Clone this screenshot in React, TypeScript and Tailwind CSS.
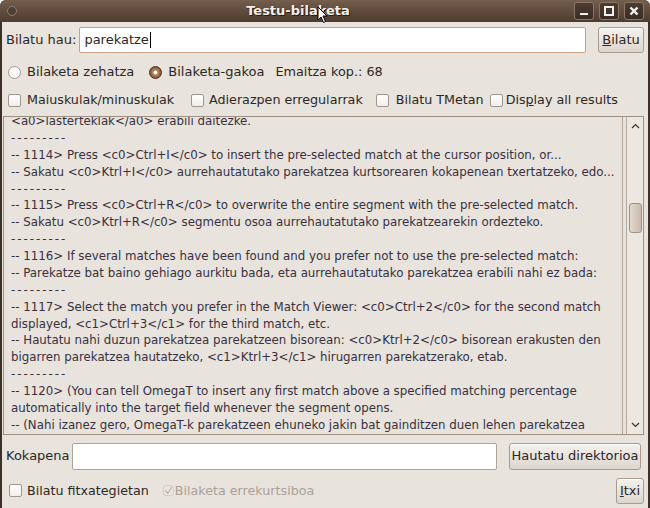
import React from 'react';

const lines = [
  '<a0>lasterteklak</a0> erabili daitezke.',
  '---------',
  '-- 1114> Press <c0>Ctrl+I</c0> to insert the pre-selected match at the cursor position, or...',
  '-- Sakatu <c0>Ktrl+I</c0> aurrehautatutako parekatzea kurtsorearen kokapenean txertatzeko, edo...',
  '---------',
  '-- 1115> Press <c0>Ctrl+R</c0> to overwrite the entire segment with the pre-selected match.',
  '-- Sakatu <c0>Ktrl+R</c0> segmentu osoa aurrehautatutako parekatzearekin ordezteko.',
  '---------',
  '-- 1116> If several matches have been found and you prefer not to use the pre-selected match:',
  '-- Parekatze bat baino gehiago aurkitu bada, eta aurrehautatutako parekatzea erabili nahi ez bada:',
  '---------',
  '-- 1117> Select the match you prefer in the Match Viewer: <c0>Ctrl+2</c0> for the second match',
  'displayed, <c1>Ctrl+3</c1> for the third match, etc.',
  '-- Hautatu nahi duzun parekatzea parekatzeen bisorean: <c0>Ktrl+2</c0> bisorean erakusten den',
  'bigarren parekatzea hautatzeko, <c1>Ktrl+3</c1> hirugarren parekatzerako, etab.',
  '---------',
  '-- 1120> (You can tell OmegaT to insert any first match above a specified matching percentage',
  'automatically into the target field whenever the segment opens.',
  '-- (Nahi izanez gero, OmegaT-k parekatzeen ehuneko jakin bat gainditzen duen lehen parekatzea',
];

const Radio = ({ checked }: { checked?: boolean }) => (
  <svg width="13" height="13" viewBox="0 0 13 13" className="shrink-0">
    {checked ? (
      <>
        <circle cx="6.5" cy="6.5" r="6" fill="#8a5f43" stroke="#4e3325" />
        <circle cx="6.5" cy="6.5" r="4" fill="#b27c55" />
        <circle cx="6.5" cy="6.5" r="2" fill="#ffffff" />
      </>
    ) : (
      <circle cx="6.5" cy="6.5" r="6" fill="#fbfaf9" stroke="#a29990" />
    )}
  </svg>
);

const Check = ({ disabled }: { disabled?: boolean }) =>
  disabled ? (
    <svg width="11" height="13" viewBox="0 0 11 13" className="shrink-0">
      <rect x="0.5" y="1.5" width="10" height="10" rx="2" fill="none" stroke="#d6cfc8" />
      <path d="M2.5 6.5 L4.8 9.3 L8.8 3" fill="none" stroke="#bdb4ab" strokeWidth="1.2" />
    </svg>
  ) : (
    <div className="w-[13px] h-[13px] shrink-0 rounded-[2px] border border-[#9f968d] bg-linear-to-b from-white to-[#f1ede9]" />
  );

const Button = ({ children, className = '' }: { children: React.ReactNode; className?: string }) => (
  <div
    className={`flex items-center justify-center rounded-[3px] border border-[#a89a8c] bg-linear-to-b from-[#f4f1ee] to-[#ddd6ce] shadow-[inset_0_1px_0_#ffffff] text-[#2d2622] ${className}`}
  >
    {children}
  </div>
);

const TitleBar = () => (
  <div className="relative h-[22px] shrink-0 flex items-center bg-linear-to-b from-[#745e4d] to-[#4d3c30]">
    <div className="w-[22px] flex justify-center pl-[2px]">
      <div className="w-[10px] h-[10px] rounded-full border border-[#8f7d6e] bg-[#4f3e33]" />
    </div>
    <div className="flex-1 text-center font-bold text-[13px] text-[#f3efeb] [text-shadow:1px_1px_1px_#1e1612]">
      Testu-bilaketa
    </div>
    <div className="flex gap-[5px] pr-[6px]">
      {['min', 'max', 'close'].map((k) => (
        <div
          key={k}
          className="w-[20px] h-[18px] rounded-[3px] border border-[#8b7767] bg-linear-to-b from-[#4c3c31] to-[#3a2d25] flex items-center justify-center"
        >
          <svg width="12" height="12" viewBox="0 0 12 12">
            {k === 'min' && <rect x="2" y="8" width="8" height="2" fill="#f4f0ec" />}
            {k === 'max' && <rect x="2" y="2" width="8" height="8" fill="none" stroke="#f4f0ec" strokeWidth="2" />}
            {k === 'close' && <path d="M2.5 2.5 L9.5 9.5 M9.5 2.5 L2.5 9.5" stroke="#f4f0ec" strokeWidth="2.4" />}
          </svg>
        </div>
      ))}
    </div>
    {/* mouse pointer over the title */}
    <svg width="12" height="18" viewBox="0 0 12 18" className="absolute left-[317px] top-[6px]">
      <path d="M1 1 L1 14 L4 11 L6.5 16.5 L8.5 15.5 L6 10 L10 10 Z" fill="#ffffff" stroke="#000000" strokeWidth="1" />
    </svg>
  </div>
);

export default function App() {
  return (
    <div className="w-[650px] h-[508px] flex flex-col overflow-hidden rounded-t-[6px] bg-[#3d3027] font-['DejaVu_Sans',sans-serif] text-[13px] text-[#2d2723]">
      <TitleBar />
      <div className="flex-1 flex flex-col mx-[2px] mb-[3px] bg-[#e8e3dd] pl-[1px] pr-[4px] pt-[5px] pb-[5px]">
        {/* search row */}
        <div className="h-[26px] flex items-center pl-[3px]">
          <span>Bilatu hau:</span>
          <div className="ml-[3px] flex-1 h-[26px] rounded-[2px] border border-[#c9a283] bg-white flex items-center pl-[4px]">
            <span>parekatze</span>
            <span className="w-px h-[16px] bg-black ml-[1px]" />
          </div>
          <Button className="ml-[12px] w-[46px] h-[26px]">
            <span><span className="underline">B</span>ilatu</span>
          </Button>
        </div>

        {/* mode row */}
        <div className="mt-[8px] h-[22px] flex items-center pl-[5px]">
          <Radio />
          <span className="ml-[6px]">Bilaketa zehatza</span>
          <span className="ml-[15px]"><Radio checked /></span>
          <span className="ml-[6px]">Bilaketa-gakoa</span>
          <span className="ml-[11px] text-[12.8px]">Emaitza kop.: 68</span>
        </div>

        {/* options row */}
        <div className="mt-[6px] h-[22px] flex items-center pl-[5px] text-[12.7px]">
          <Check />
          <span className="ml-[6px]">Maiuskulak/minuskulak</span>
          <span className="ml-[17px]"><Check /></span>
          <span className="ml-[5px]">Adierazpen erregularrak</span>
          <span className="ml-[13px]"><Check /></span>
          <span className="ml-[7px]">Bilatu TMetan</span>
          <span className="ml-[6px]"><Check /></span>
          <span className="ml-[3px]">Dis<span className="underline">p</span>lay all results</span>
        </div>

        {/* results */}
        <div className="mt-[5px] flex-1 min-h-0 flex border border-[#9e8f81] bg-[#e8e3dd]">
          <div className="flex-1 min-w-0 overflow-hidden border-r border-[#b5a89b] mr-[3px] pl-[7px]">
            <div className="-mt-[4px] text-[11.8px] leading-[16.875px] text-[#383040] whitespace-pre">
              {lines.map((l, i) =>
                l === '---------' ? (
                  <div key={i} className="tracking-[2px]">{l}</div>
                ) : (
                  <div key={i}>{l}</div>
                )
              )}
            </div>
          </div>
          <div className="w-[17px] shrink-0 flex flex-col items-center border-l border-[#b5a89b] bg-[#ece7e1]">
            <svg width="9" height="6" viewBox="0 0 9 6" className="mt-[6px]">
              <path d="M1 5 L4.5 1.5 L8 5" fill="none" stroke="#3a322c" strokeWidth="1.2" />
            </svg>
            <div className="mt-[74px] w-[13px] h-[30px] rounded-[3px] border border-[#a0907f] bg-linear-to-r from-[#e3d9cf] to-[#c9bbad]" />
            <div className="flex-1" />
            <svg width="9" height="6" viewBox="0 0 9 6" className="mb-[6px]">
              <path d="M1 1 L4.5 4.5 L8 1" fill="none" stroke="#3a322c" strokeWidth="1.2" />
            </svg>
          </div>
        </div>

        {/* location row */}
        <div className="mt-[8px] h-[27px] flex items-center pl-[3px]">
          <span>Kokapena</span>
          <div className="ml-[2px] flex-1 h-[27px] rounded-[2px] border border-[#aea398] bg-white" />
          <Button className="ml-[12px] w-[132px] h-[27px] mr-[3px]">Hautatu direktorioa</Button>
        </div>

        {/* bottom row */}
        <div className="mt-[8px] h-[26px] flex items-center pl-[6px] text-[12.7px]">
          <Check />
          <span className="ml-[5px]">Bilatu fitxategietan</span>
          <span className="ml-[14px]"><Check disabled /></span>
          <span className="ml-[1px] text-[#aaa198]">Bilaketa errekurtsiboa</span>
          <div className="flex-1" />
          <Button className="w-[28px] h-[26px] text-[13px]">
            <span><span className="underline">I</span>txi</span>
          </Button>
        </div>
      </div>
    </div>
  );
}
